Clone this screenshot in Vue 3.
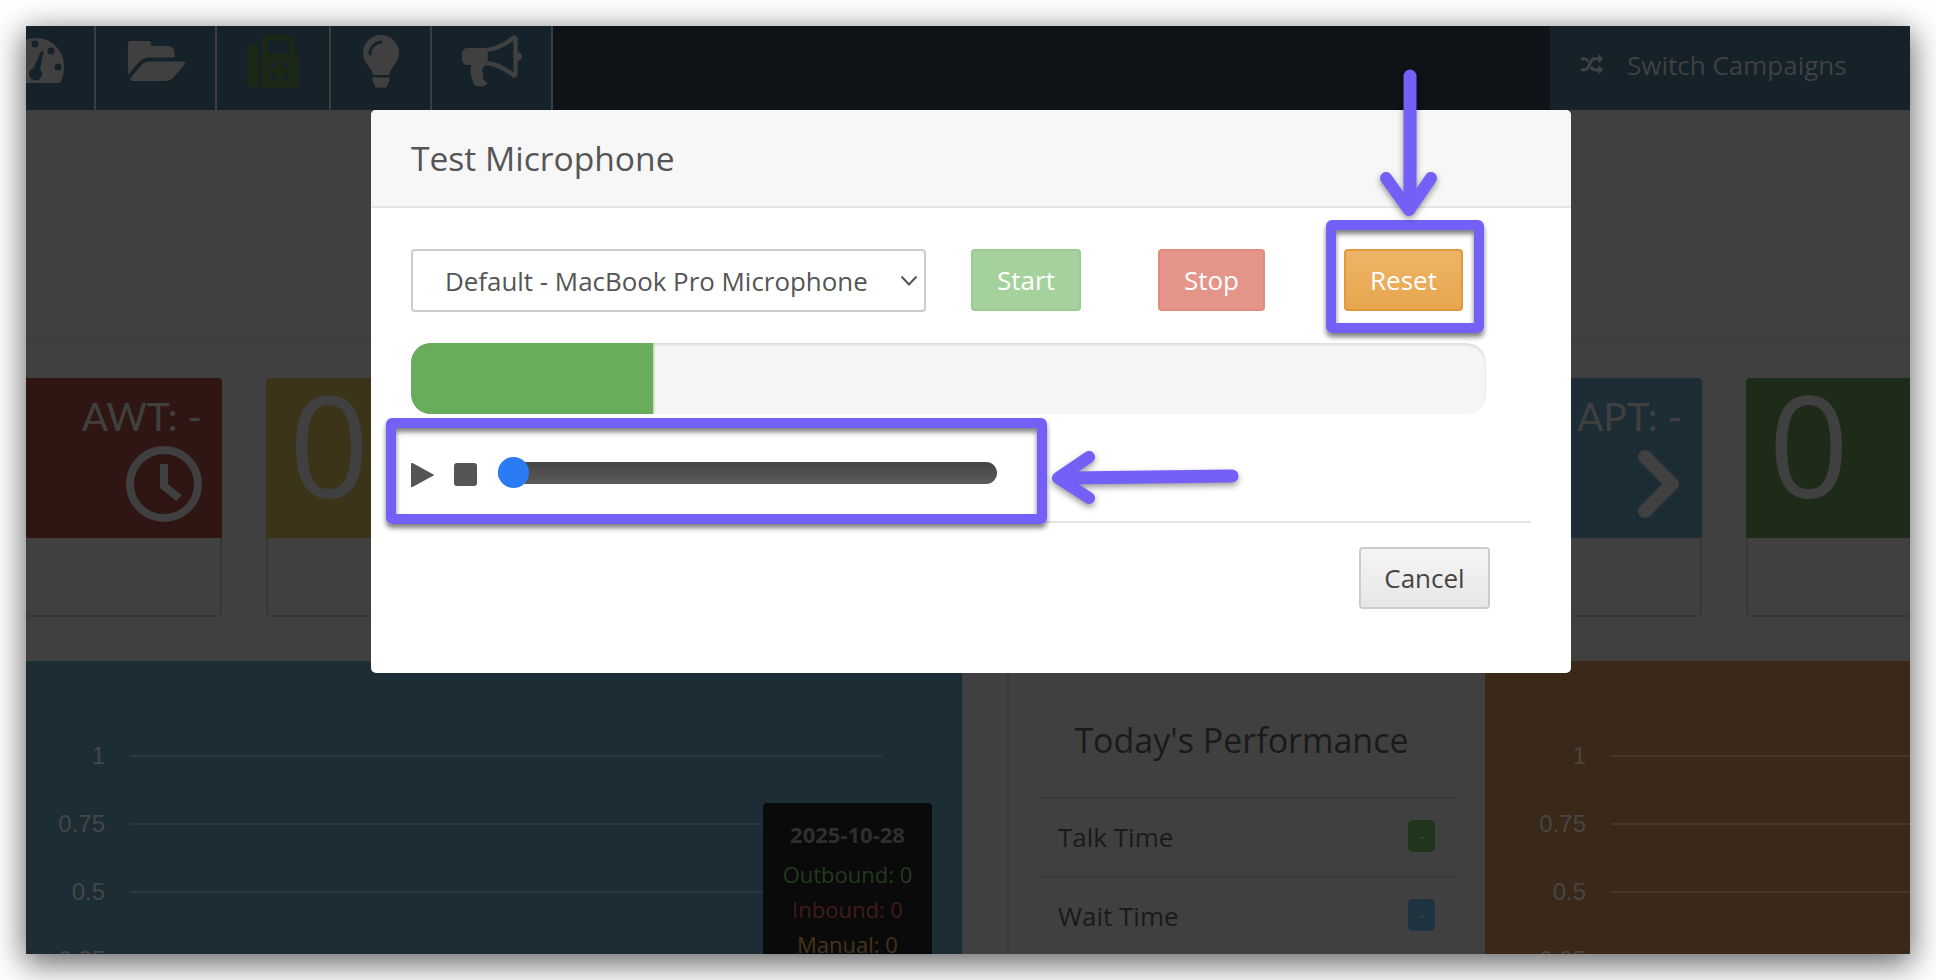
<template>
  <div class="page">
    <div class="window">
      <header class="topbar">
        <nav class="nav">
          <div class="nav-item nav-gauge">
            <svg width="68" height="84" viewBox="0 0 68 84">
              <path class="dim" d="M-20 57v-17a30 28 0 0 1 30-28a28 28 0 0 1 28 30q0 8-4 15z" />
              <circle class="cut" cx="9" cy="18" r="3.500" />
              <circle class="cut" cx="25" cy="25" r="3.500" />
              <circle class="cut" cx="32" cy="41" r="3.500" />
              <path class="cut" d="M6 46l8.500-20q1.500-2 3 0l-4.500 22z" />
              <circle class="cut" cx="9.500" cy="48" r="6.500" />
            </svg>
          </div>
          <div class="nav-item nav-folder">
            <svg width="59" height="40" viewBox="0 224 1943 1312">
              <path class="dim" d="M1943 952q0 31-31 66l-336 396q-43 51-120.500 86.500t-143.500 35.500h-1088q-34 0-60.500-13t-26.500-43q0-31 31-66l336-396q43-51 120.500-86.500t143.500-35.500h1088q34 0 60.500 13t26.500 43zm-343-344v160h-832q-94 0-197 47.500t-164 119.500l-337 396-5 6q0-4-.5-12.500t-.5-12.500v-960q0-92 66-158t158-66h320q92 0 158 66t66 158v32h544q92 0 158 66t66 158z" />
            </svg>
          </div>
          <div class="nav-item nav-fax">
            <svg width="52" height="53" viewBox="0 0 52 53">
              <rect class="fax" x="0" y="10" width="12" height="42" rx="5" />
              <path class="fax" d="M15 3q0-3 3-3h22q2 0 4 2l3 4q1 1 1 3v10q4 1 4 5v25q0 4-4 4h-29q-4 0-4-4z" />
              <path class="cut" d="M20 5.500h19l4 5v8.500h-23z" />
              <rect class="cut" x="23" y="27" width="6" height="6" rx="1.500" />
              <rect class="cut" x="36" y="27" width="6" height="6" rx="1.500" />
              <rect class="cut" x="23" y="39" width="6" height="6" rx="1.500" />
              <rect class="cut" x="36" y="39" width="6" height="6" rx="1.500" />
            </svg>
          </div>
          <div class="nav-item nav-bulb">
            <svg width="36" height="53" viewBox="0 0 36 53">
              <path class="dim" d="M18 0c10 0 18 8 18 18c0 10-8 13-10 22h-16c-2-9-10-12-10-22c0-10 8-18 18-18z" />
              <path class="dim" d="M9.500 42.500h17v3l-3 7h-11l-3-7z" />
              <path class="cut-line" d="M7 19c0-6 4-11 11-12" />
            </svg>
          </div>
          <div class="nav-item nav-horn">
            <svg width="60" height="52" viewBox="0 128 1792 1552">
              <path class="dim" d="M1664 640q53 0 90.500 37.500t37.500 90.500-37.500 90.500-90.500 37.500v384q0 52-38 90t-90 38q-417-347-812-380-58 19-91 66t-31 100.500 40 92.500q-20 33-23 65.500t6 58 33.500 55 48 50 61.500 50.500q-29 58-111.500 83t-168.500 11.500-132-55.500q-7-23-29.500-87.500t-32-94.500-23-89-15-101 3.500-98.500 22-110.500h-122q-66 0-113-47t-47-113v-192q0-66 47-113t113-47h480q435 0 896-384 52 0 90 38t38 90v384zm-128 604v-954q-394 302-768 343v270q377 42 768 341z" />
            </svg>
          </div>
        </nav>
        <div class="switch">
          <svg width="24" height="22" viewBox="0 0 1792 1792">
            <path class="switch-icon" d="M666 481q-60 92-137 273-22-45-37-72.500t-40.500-63.500-51-56.500-63-35-81.500-14.500h-224q-14 0-23-9t-9-23v-192q0-14 9-23t23-9h224q250 0 410 225zm1126 799q0 14-9 23l-320 320q-9 9-23 9-13 0-22.500-9.500t-9.500-22.500v-192q-32 0-85 .5t-81 1-73-1-71-5-64-10.500-63-18.500-58-28.500-59-40-55-53.500-56-69.500q59-93 136-273 22 45 37 72.500t40.500 63.500 51 56.500 63 35 81.500 14.500h256v-192q0-14 9-23t23-9q12 0 24 10l319 319q9 9 9 23zm0-896q0 14-9 23l-320 320q-9 9-23 9-13 0-22.500-9.500t-9.500-22.500v-192h-256q-48 0-87 15t-69 45-51 61.500-45 77.500q-32 62-78 171-29 66-49.500 111t-54 105-64 100-74 83-90 68.500-106.500 42-128 16.500h-224q-14 0-23-9t-9-23v-192q0-14 9-23t23-9h224q48 0 87-15t69-45 51-61.500 45-77.500q32-62 78-171 29-66 49.500-111t54-105 64-100 74-83 90-68.500 106.500-42 128-16.500h256v-192q0-14 9-23t23-9q12 0 24 10l319 319q9 9 9 23z" />
          </svg>
          <span>Switch Campaigns</span>
        </div>
      </header>

      <div class="title-band"></div>

      <section class="stats">
        <div v-for="card in cards" :key="card.key" class="stat">
          <div class="stat-head" :class="card.color">
            <template v-if="card.key === 'awt'">
              <div class="stat-label">AWT: -</div>
              <svg class="stat-icon" width="76" height="76" viewBox="0 0 76 76">
                <circle cx="38" cy="38" r="34" />
                <path d="M38 18v22l15 12" />
              </svg>
            </template>
            <template v-else-if="card.key === 'apt'">
              <div class="stat-label">APT: -</div>
              <svg class="stat-icon chevron" width="44" height="68" viewBox="0 0 44 68">
                <path d="M7 7l27 27l-27 27" />
              </svg>
            </template>
            <div v-else class="stat-zero">0</div>
          </div>
          <div class="stat-foot"></div>
        </div>
      </section>

      <section class="panels">
        <div class="chart chart-blue">
          <div v-for="tick in ticks" :key="tick" class="chart-row">
            <span class="tick">{{ tick }}</span>
            <span class="grid-line"></span>
          </div>
          <div class="chart-tip">
            <div class="tip-date">2025-10-28</div>
            <div class="tip-out">Outbound: 0</div>
            <div class="tip-in">Inbound: 0</div>
            <div class="tip-man">Manual: 0</div>
          </div>
        </div>
        <div class="perf">
          <div class="perf-inner">
            <h3>Today's Performance</h3>
            <div v-for="row in perfRows" :key="row.label" class="perf-row">
              <span class="perf-label">{{ row.label }}</span>
              <span class="perf-badge" :class="row.color">-</span>
            </div>
          </div>
        </div>
        <div class="chart chart-brown">
          <div v-for="tick in ticks" :key="tick" class="chart-row">
            <span class="tick">{{ tick }}</span>
            <span class="grid-line"></span>
          </div>
        </div>
      </section>
    </div>

    <div class="modal">
      <div class="modal-head">Test Microphone</div>
      <div class="modal-body">
        <div class="controls">
          <div class="select">
            <span>Default - MacBook Pro Microphone</span>
            <svg width="18" height="11" viewBox="0 0 18 11"><path d="M1.500 1.500l7.500 8l7.500-8" /></svg>
          </div>
          <button class="btn btn-start">Start</button>
          <button class="btn btn-stop">Stop</button>
          <button class="btn btn-reset">Reset</button>
        </div>
        <div class="progress"><div class="progress-bar" :style="{ width: level + 'px' }"></div></div>
        <div class="player">
          <svg width="24" height="26" viewBox="0 0 24 26"><path d="M1.500 1l21 11.500q1 .5 0 1l-21 11.500q-1.500 .5-1.500-1v-22q0-1.500 1.500-1z" /></svg>
          <span class="player-stop"></span>
          <div class="track"><span class="thumb"></span></div>
        </div>
        <div class="divider"></div>
        <div class="foot">
          <button class="btn-cancel">Cancel</button>
        </div>
      </div>
    </div>

    <div class="callout callout-reset"></div>
    <div class="callout callout-player"></div>
    <svg class="arrows" width="1936" height="980" viewBox="0 0 1936 980">
      <path d="M1410 76v125" />
      <path d="M1386 178l23 32l22-32" class="head" />
      <path d="M1232 476l-165 2" />
      <path d="M1089 457l-31 21l31 20" class="head" />
    </svg>
  </div>
</template>

<script setup>
const level = 242

const cards = [
  { key: 'awt', color: 'red' },
  { key: 'z1', color: 'yellow' },
  { key: 'h1', color: 'blue' },
  { key: 'h2', color: 'green' },
  { key: 'h3', color: 'red' },
  { key: 'h4', color: 'yellow' },
  { key: 'apt', color: 'blue' },
  { key: 'z2', color: 'green' },
]

const ticks = ['1', '0.75', '0.5', '0.25']

const perfRows = [
  { label: 'Talk Time', color: 'badge-green' },
  { label: 'Wait Time', color: 'badge-blue' },
]
</script>

<style>
html, body {
  margin: 0;
  background: #fff;
  overflow: hidden;
}
</style>

<style scoped>
.page {
  position: relative;
  width: 1936px;
  height: 980px;
  padding: 26px;
  box-sizing: border-box;
  font-family: "Open Sans", "Liberation Sans", sans-serif;
  color: #555;
  background: #fff;
  overflow: hidden;
}

.window {
  width: 1884px;
  height: 928px;
  background: #404040;
  overflow: hidden;
  box-shadow: 0 8px 30px 2px rgba(0, 0, 0, 0.6);
}

.topbar {
  display: flex;
  justify-content: space-between;
  height: 84px;
  background: #0f1216;
}

.nav {
  display: flex;
}

.nav-item {
  display: flex;
  align-items: center;
  justify-content: center;
  height: 84px;
  padding-bottom: 14px;
  background: #16222a;
  border-right: 2px solid #3a3f42;
  box-sizing: border-box;
}

.nav-gauge { width: 70px; justify-content: flex-start; padding-bottom: 0; }
.nav-folder { width: 121px; }
.nav-fax { width: 114px; }
.nav-bulb { width: 101px; }
.nav-horn { width: 121px; }

.dim { fill: #404040; }
.fax { fill: #1b2815; }
.cut { fill: #16222a; }
.cut-line {
  fill: none;
  stroke: #16222a;
  stroke-width: 3;
  stroke-linecap: round;
}

.switch {
  display: flex;
  align-items: center;
  gap: 23px;
  width: 360px;
  padding: 0 0 7px 30px;
  box-sizing: border-box;
  background: #16222a;
  color: #3e4142;
  font-size: 26px;
}

.switch-icon { fill: #404344; }

.title-band {
  height: 230px;
  box-sizing: border-box;
  border-bottom: 2px solid #3c3c3c;
}

.stats {
  display: flex;
  gap: 43.67px;
  margin: 38px 0 0 -7px;
  height: 283px;
}

.stat {
  flex: 0 0 203px;
  height: 239px;
  display: flex;
  flex-direction: column;
}

.stat-head {
  height: 160px;
  flex: none;
  padding: 0 20px;
  box-sizing: border-box;
  display: flex;
  flex-direction: column;
  align-items: flex-end;
  border-radius: 4px 4px 0 0;
  color: #404040;
  font-family: Lato, "Liberation Sans", sans-serif;
}

.stat-foot {
  flex: 1;
  border: 2px solid #383838;
  border-top: 0;
  border-radius: 0 0 4px 4px;
}

.red { background: #301613; }
.yellow { background: #3b3419; }
.blue { background: #1c2d35; }
.green { background: #1f2b19; }

.stat-label {
  font-size: 39px;
  line-height: 50px;
  margin-top: 13px;
}

.stat-icon {
  margin-top: 5px;
  fill: none;
  stroke: #404040;
  stroke-width: 8;
}

.chevron {
  margin-top: 9px;
  stroke-width: 14;
  stroke-linecap: round;
  stroke-linejoin: round;
}

.stat-zero {
  align-self: flex-start;
  font-family: "Open Sans", sans-serif;
  font-size: 141px;
  line-height: 160px;
  margin: -15px 0 0 3px;
}

.panels {
  display: flex;
  height: 293px;
}

.chart {
  position: relative;
  padding-top: 61px;
  box-sizing: border-box;
  overflow: hidden;
}

.chart-blue {
  width: 936px;
  background: #1d2d35;
  padding-right: 80px;
}

.chart-brown {
  width: 425px;
  background: #3a2918;
}

.chart-row {
  display: flex;
  align-items: center;
  gap: 25px;
  height: 68px;
}

.tick {
  flex: 0 0 79px;
  text-align: right;
  font-family: "Liberation Sans", Arial, sans-serif;
  font-size: 24px;
  color: #464646;
}

.chart-brown .tick { flex-basis: 101px; color: #484644; }

.grid-line {
  flex: 1;
  height: 2px;
  background: #273840;
}

.chart-brown .grid-line { background: #473727; }

.chart-tip {
  position: absolute;
  left: 737px;
  top: 142px;
  width: 169px;
  height: 200px;
  padding-top: 14px;
  box-sizing: border-box;
  background: #0a0a0a;
  border-radius: 4px;
  text-align: center;
  font-family: "Open Sans", sans-serif;
  font-size: 22px;
  line-height: 35px;
}

.tip-date {
  font-weight: 700;
  color: #2f2f2f;
  margin-bottom: 5px;
}

.tip-out { color: #233a1f; }
.tip-in { color: #411c1c; }
.tip-man { color: #46341a; }

.perf {
  width: 523px;
  padding-left: 45px;
  box-sizing: border-box;
}

.perf-inner {
  height: 100%;
  border-left: 2px solid #3a3a3a;
  padding: 0 30px 0 29px;
}

.perf h3 {
  margin: 0;
  height: 136px;
  padding: 56px 10px 0 0;
  box-sizing: border-box;
  text-align: center;
  font-size: 34px;
  font-weight: 400;
  line-height: 46px;
  color: #1a1a1a;
}

.perf-row {
  display: flex;
  justify-content: space-between;
  align-items: center;
  height: 79px;
  padding: 0 20px;
  box-sizing: border-box;
  border-top: 2px solid #393939;
  color: #1a1a1a;
  font-size: 26px;
}

.perf-label {
  margin-top: -2px;
}

.perf-badge {
  width: 27px;
  height: 32px;
  border-radius: 5px;
  text-align: center;
  font-size: 18px;
  line-height: 32px;
  color: #404040;
  margin-top: -4px;
}

.badge-green { background: #20351c; }
.badge-blue { background: #1d3340; }

.modal {
  position: absolute;
  left: 371px;
  top: 110px;
  width: 1200px;
  height: 563px;
  background: #fff;
  border-radius: 5px;
  overflow: hidden;
}

.modal-head {
  height: 98px;
  padding-left: 40px;
  box-sizing: border-box;
  background: #f7f7f7;
  border-bottom: 2px solid #e5e5e5;
  font-size: 33.600px;
  line-height: 97px;
  color: #555;
}

.modal-body {
  padding: 41px 40px 0;
}

.controls {
  display: flex;
  align-items: flex-start;
}

.select {
  width: 515px;
  height: 63px;
  display: flex;
  align-items: center;
  justify-content: space-between;
  padding: 0 6px 0 32px;
  box-sizing: border-box;
  border: 2px solid #ccc;
  border-radius: 4px;
  font-size: 25.900px;
  color: #555;
}

.select svg {
  fill: none;
  stroke: #555;
  stroke-width: 2;
}

.btn {
  height: 62px;
  border-radius: 4px;
  color: #fff;
  font: 400 26px "Open Sans", sans-serif;
  padding: 0;
}

.btn-start {
  width: 110px;
  margin-left: 45px;
  background: #a5d29c;
  border: 2px solid #9ccb93;
}

.btn-stop {
  width: 107px;
  margin-left: 77px;
  background: #e59489;
  border: 2px solid #e08a80;
}

.btn-reset {
  width: 119px;
  margin-left: 79px;
  background: linear-gradient(#edb466, #e8a64e);
  border: 2px solid #e09a3b;
}

.progress {
  width: 1075px;
  height: 71px;
  margin-top: 31px;
  background: #f5f5f5;
  border-radius: 20px;
  box-shadow: inset 0 2px 3px rgba(0, 0, 0, 0.1);
  overflow: hidden;
}

.progress-bar {
  height: 100%;
  background: #69ac5c;
  box-shadow: 1px 0 2px rgba(105, 172, 92, 0.5);
}

.player {
  display: flex;
  align-items: center;
  height: 107px;
  padding-top: 10px;
  box-sizing: border-box;
}

.player svg {
  fill: #555;
  margin-top: 4px;
}

.player-stop {
  width: 23px;
  height: 23px;
  margin: 4px 0 0 19px;
  background: #555;
  border-radius: 3px;
}

.track {
  position: relative;
  width: 499px;
  height: 22px;
  margin-left: 21px;
  border-radius: 11px;
  background: linear-gradient(#444, #5a5a5a);
}

.thumb {
  position: absolute;
  left: 0;
  top: -5px;
  width: 31px;
  height: 31px;
  border-radius: 50%;
  background: #2b7bf5;
}

.divider {
  width: 1120px;
  height: 2px;
  background: #e5e5e5;
}

.foot {
  display: flex;
  width: 1079px;
  justify-content: flex-end;
  padding-top: 24px;
}

.btn-cancel {
  width: 131px;
  height: 62px;
  padding: 0;
  border: 2px solid #ccc;
  border-radius: 4px;
  background: linear-gradient(#f5f5f5, #e6e6e6);
  color: #444;
  font: 400 26px "Open Sans", sans-serif;
}

.callout {
  position: absolute;
  box-sizing: border-box;
  border: 10px solid #7360f7;
  border-radius: 6px;
  box-shadow: 0 4px 5px rgba(0, 0, 0, 0.5), inset 0 4px 5px rgba(0, 0, 0, 0.5);
}

.callout-reset {
  left: 1326px;
  top: 220px;
  width: 158px;
  height: 113px;
}

.callout-player {
  left: 386px;
  top: 418px;
  width: 661px;
  height: 106px;
}

.arrows {
  position: absolute;
  left: 0;
  top: 0;
  fill: none;
  stroke: #7360f7;
  stroke-width: 13;
  stroke-linecap: round;
  stroke-linejoin: round;
  filter: drop-shadow(0 3px 3px rgba(0, 0, 0, 0.4));
  pointer-events: none;
}

.head {
  stroke-width: 12;
}
</style>
